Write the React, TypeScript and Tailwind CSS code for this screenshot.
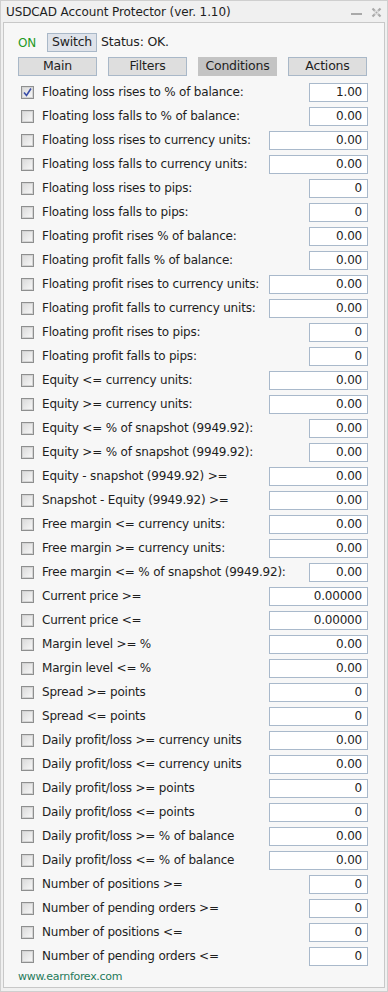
import React from 'react';

type Row = {
  label: string;
  value: string;
  wide?: boolean;
  checked?: boolean;
};

const rows: Row[] = [
  { label: 'Floating loss rises to % of balance:', value: '1.00', checked: true },
  { label: 'Floating loss falls to % of balance:', value: '0.00' },
  { label: 'Floating loss rises to currency units:', value: '0.00', wide: true },
  { label: 'Floating loss falls to currency units:', value: '0.00', wide: true },
  { label: 'Floating loss rises to pips:', value: '0' },
  { label: 'Floating loss falls to pips:', value: '0' },
  { label: 'Floating profit rises % of balance:', value: '0.00' },
  { label: 'Floating profit falls % of balance:', value: '0.00' },
  { label: 'Floating profit rises to currency units:', value: '0.00', wide: true },
  { label: 'Floating profit falls to currency units:', value: '0.00', wide: true },
  { label: 'Floating profit rises to pips:', value: '0' },
  { label: 'Floating profit falls to pips:', value: '0' },
  { label: 'Equity <= currency units:', value: '0.00', wide: true },
  { label: 'Equity >= currency units:', value: '0.00', wide: true },
  { label: 'Equity <= % of snapshot (9949.92):', value: '0.00' },
  { label: 'Equity >= % of snapshot (9949.92):', value: '0.00' },
  { label: 'Equity - snapshot (9949.92) >=', value: '0.00', wide: true },
  { label: 'Snapshot - Equity (9949.92) >=', value: '0.00', wide: true },
  { label: 'Free margin <= currency units:', value: '0.00', wide: true },
  { label: 'Free margin >= currency units:', value: '0.00', wide: true },
  { label: 'Free margin <= % of snapshot (9949.92):', value: '0.00' },
  { label: 'Current price >=', value: '0.00000', wide: true },
  { label: 'Current price <=', value: '0.00000', wide: true },
  { label: 'Margin level >= %', value: '0.00', wide: true },
  { label: 'Margin level <= %', value: '0.00', wide: true },
  { label: 'Spread >= points', value: '0', wide: true },
  { label: 'Spread <= points', value: '0', wide: true },
  { label: 'Daily profit/loss >= currency units', value: '0.00', wide: true },
  { label: 'Daily profit/loss <= currency units', value: '0.00', wide: true },
  { label: 'Daily profit/loss >= points', value: '0', wide: true },
  { label: 'Daily profit/loss <= points', value: '0', wide: true },
  { label: 'Daily profit/loss >= % of balance', value: '0.00', wide: true },
  { label: 'Daily profit/loss <= % of balance', value: '0.00', wide: true },
  { label: 'Number of positions >=', value: '0' },
  { label: 'Number of pending orders >=', value: '0' },
  { label: 'Number of positions <=', value: '0' },
  { label: 'Number of pending orders <=', value: '0' },
];

const tabs = ['Main', 'Filters', 'Conditions', 'Actions'];

const CheckBox = ({ checked }: { checked?: boolean }) => (
  <span className="flex h-[13px] w-[13px] shrink-0 items-center justify-center border border-[#8e8f8f] bg-[#f4f4f4]">
    <span className="flex h-[11px] w-[11px] items-center justify-center border border-[#d4d4d4] bg-gradient-to-br from-[#dcdcdc] to-[#f6f6f6]">
      {checked && (
        <svg width="9" height="9" viewBox="0 0 9 9">
          <path d="M1 4.5 L3.5 7.5 L8 0.5" fill="none" stroke="#3a4ea8" strokeWidth="1.6" />
        </svg>
      )}
    </span>
  </span>
);

const App = () => {
  return (
    <div className="flex h-[992px] w-[388px] flex-col border border-[#cfcfcf] bg-[#f0f0f0] font-['DejaVu_Sans',sans-serif] text-[#1e1e1e]">
      <div className="flex h-[21px] shrink-0 items-center justify-between pl-[5px] pr-[5px] pt-[1px]">
        <span className="text-[12px] tracking-[-0.1px]">USDCAD Account Protector (ver. 1.10)</span>
        <div className="flex items-center gap-[9px]">
          <svg width="11" height="10" viewBox="0 0 11 10">
            <rect x="0" y="6" width="11" height="2" fill="#a9a9a9" />
          </svg>
          <svg width="11" height="11" viewBox="0 0 11 11">
            <path d="M1.5 1.5 L9.5 9.5 M9.5 1.5 L1.5 9.5" stroke="#a9a9a9" strokeWidth="2.2" />
            <rect x="3.5" y="3.5" width="4" height="4" fill="#f0f0f0" />
            <rect x="4.5" y="4.5" width="2" height="2" fill="#a9a9a9" />
          </svg>
        </div>
      </div>
      <div className="mx-[2px] mb-[3px] flex flex-1 flex-col border border-[#c8c8c8] bg-[#f7f7f7] pl-[14px] pr-[16px] pt-[10px] text-[12px] tracking-[-0.2px]">
        <div className="flex h-[19px] items-center">
          <span className="w-[29px] text-[#1f9a1f]">ON</span>
          <span className="flex h-[19px] w-[50px] items-center justify-center border border-[#a9b8c8] bg-[#dfe3ea] text-[12.5px]">
            Switch
          </span>
          <span className="ml-[4px] text-[12.5px]">Status: OK.</span>
        </div>
        <div className="mt-[5px] flex h-[19px] gap-[11px]">
          {tabs.map((tab) => (
            <span
              key={tab}
              className={`flex w-[79px] items-center justify-center border text-[12.5px] ${
                tab === 'Conditions'
                  ? 'border-[#c4c4c4] bg-[#c4c4c4]'
                  : 'border-[#a9b8c8] bg-[#dedede]'
              }`}
            >
              {tab}
            </span>
          ))}
        </div>
        <div className="mt-[4px] flex flex-col">
          {rows.map((row, index) => (
            <div key={index} className="flex h-6 items-center pl-[3px]">
              <CheckBox checked={row.checked} />
              <span className="ml-[8px] flex-1 whitespace-nowrap">{row.label}</span>
              <span
                className={`flex h-[19px] items-center justify-end border border-[#a9b9cb] bg-white pr-[5px] ${
                  row.wide ? 'w-[99px]' : 'w-[59px]'
                }`}
              >
                {row.value}
              </span>
            </div>
          ))}
        </div>
        <div className="flex h-[18px] items-center text-[11px] tracking-[-0.3px] text-[#1f7a5a]">www.earnforex.com</div>
      </div>
    </div>
  );
};

export default App;
